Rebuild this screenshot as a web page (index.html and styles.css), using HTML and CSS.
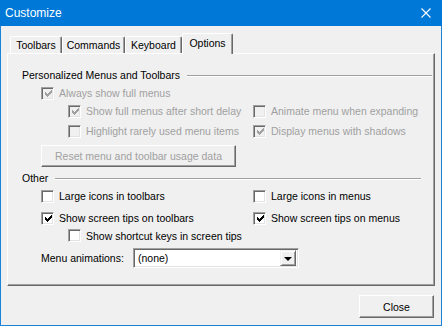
FILE: index.html
```html
<!DOCTYPE html>
<html lang="en">
<head>
    <meta charset="UTF-8">
    <title>Customize</title>
    <link rel="stylesheet" href="styles.css">
</head>
<body>
    <div class="window">
        <div class="titlebar">
            <span class="title">Customize</span>
            <svg class="close-x" width="10" height="10" viewBox="0 0 10 10">
                <path d="M0.5 0.5 L9.5 9.5 M9.5 0.5 L0.5 9.5" stroke="#fff" stroke-width="1.1" fill="none"/>
            </svg>
        </div>

        <div class="content">
            <div class="tabs">
                <div class="tab tab-toolbars">Toolbars</div>
                <div class="tab tab-commands">Commands</div>
                <div class="tab tab-keyboard">Keyboard</div>
                <div class="tab tab-options selected">Options</div>
            </div>

            <div class="panel">
                <div class="group-header first">
                    <span>Personalized Menus and Toolbars</span>
                    <div class="etch"></div>
                </div>

                <div class="row row-1 disabled">
                    <label class="check checked"><span class="box"></span>Always show full menus</label>
                </div>
                <div class="row row-2 disabled sub">
                    <label class="check checked cell-sub"><span class="box"></span>Show full menus after short delay</label>
                    <label class="check"><span class="box"></span>Animate menu when expanding</label>
                </div>
                <div class="row row-3 disabled sub">
                    <label class="check cell-sub"><span class="box"></span>Highlight rarely used menu items</label>
                    <label class="check checked"><span class="box"></span>Display menus with shadows</label>
                </div>

                <div class="reset-wrap">
                    <button class="btn reset" disabled>Reset menu and toolbar usage data</button>
                </div>

                <div class="group-header second">
                    <span>Other</span>
                    <div class="etch"></div>
                </div>

                <div class="row row-4">
                    <label class="check cell"><span class="box"></span>Large icons in toolbars</label>
                    <label class="check"><span class="box"></span>Large icons in menus</label>
                </div>
                <div class="row row-5">
                    <label class="check checked cell"><span class="box"></span>Show screen tips on toolbars</label>
                    <label class="check checked"><span class="box"></span>Show screen tips on menus</label>
                </div>
                <div class="row row-6 sub">
                    <label class="check"><span class="box"></span>Show shortcut keys in screen tips</label>
                </div>

                <div class="row select-row">
                    <span class="select-label">Menu animations:</span>
                    <div class="select">
                        <span class="select-value">(none)</span>
                        <span class="select-btn"><span class="arrow"></span></span>
                    </div>
                </div>
            </div>

            <div class="footer">
                <button class="btn close">Close</button>
            </div>
        </div>
    </div>
</body>
</html>
```

FILE: styles.css
```css
body {
    margin: 0;
    font-family: 'Liberation Sans', Arial, sans-serif;
    font-size: 10.5px;
    color: #000000;
    background-color: #f0f0f0;
}

.window {
    width: 442px;
    height: 326px;
    box-sizing: border-box;
    border: 1px solid #1c84d8;
    border-top: none;
    background-color: #f0f0f0;
}

/* Title bar */
.titlebar {
    height: 26px;
    margin: 0 -1px;
    background-color: #0078d7;
    display: flex;
    align-items: center;
    justify-content: space-between;
    padding: 0 11px 0 5px;
}

.title {
    color: #ffffff;
    font-size: 12px;
}

.close-x {
    display: block;
}

.content {
    padding: 7px 6px 0 6px;
}

/* Tabs */
.tabs {
    display: flex;
    align-items: flex-end;
    height: 20px;
    padding-left: 3px;
    position: relative;
    z-index: 1;
}

.tab {
    box-sizing: border-box;
    height: 17px;
    border-top: 1px solid #ffffff;
    border-left: 1px solid #ffffff;
    border-right: 1px solid #696969;
    box-shadow: inset -1px 0 0 #a0a0a0;
    border-radius: 2px 2px 0 0;
    text-align: center;
    line-height: 16px;
    background-color: #f0f0f0;
}

.tab-toolbars { width: 52px; }
.tab-commands { width: 63px; }
.tab-keyboard { width: 57px; }

.tab-options {
    width: 51px;
    height: 21px;
    margin-bottom: -1px;
    line-height: 18px;
}

/* Panel */
.panel {
    box-sizing: border-box;
    height: 233px;
    border-top: 1px solid #ffffff;
    border-left: 1px solid #ffffff;
    border-right: 1px solid #696969;
    border-bottom: 1px solid #696969;
    box-shadow: inset -1px -1px 0 #a0a0a0;
    padding: 14px 0 0 14px;
}

.group-header {
    display: flex;
    align-items: center;
    height: 14px;
    gap: 7px;
}

.group-header.first {
    margin-right: 2px;
}

.group-header.second {
    margin-top: 4px;
    margin-right: 13px;
}

.etch {
    flex: 1;
    height: 1px;
    background-color: #a0a0a0;
    border-bottom: 1px solid #ffffff;
    margin-top: 1px;
}

/* Checkbox rows */
.row {
    display: flex;
    align-items: center;
    height: 18px;
    padding-left: 19px;
}

.row.sub {
    padding-left: 46px;
}

.row-1 { margin-top: 2px; }
.row-3 { margin-top: 2px; }
.row-4 { margin-top: 2px; }
.row-5 { margin-top: 4px; }
.row-6 { height: 17px; }

.cell {
    width: 212px;
}

.cell-sub {
    width: 185px;
}

.check {
    display: flex;
    align-items: center;
    gap: 5px;
    white-space: nowrap;
}

.box {
    box-sizing: border-box;
    width: 13px;
    height: 13px;
    flex: none;
    background-color: #ffffff;
    border-top: 1px solid #a0a0a0;
    border-left: 1px solid #a0a0a0;
    border-right: 1px solid #ffffff;
    border-bottom: 1px solid #ffffff;
    box-shadow: inset 1px 1px 0 #696969, inset -1px -1px 0 #e3e3e3;
    position: relative;
}

.check.checked .box::after {
    content: "";
    position: absolute;
    left: 3px;
    top: 2px;
    width: 7px;
    height: 7px;
    background-image: url("data:image/svg+xml,%3Csvg xmlns='http://www.w3.org/2000/svg' width='7' height='7'%3E%3Cpath d='M0 2h1v1h1v1h1v-1h1v-1h1v-1h1v-1h1v3h-1v1h-1v1h-1v1h-1v1h-1v-1h-1v-1h-1v-1h-1z' fill='%23000'/%3E%3C/svg%3E");
}

.disabled .check {
    color: #a0a0a0;
}

.disabled .box {
    background-color: #f0f0f0;
}

.disabled .check.checked .box::after {
    background-image: url("data:image/svg+xml,%3Csvg xmlns='http://www.w3.org/2000/svg' width='7' height='7'%3E%3Cpath d='M0 2h1v1h1v1h1v-1h1v-1h1v-1h1v-1h1v3h-1v1h-1v1h-1v1h-1v1h-1v-1h-1v-1h-1v-1h-1z' fill='%23a0a0a0'/%3E%3C/svg%3E");
}

/* Buttons */
.btn {
    box-sizing: border-box;
    font-family: 'Liberation Sans', Arial, sans-serif;
    font-size: 10.5px;
    color: #000000;
    background-color: #f0f0f0;
    border-top: 1px solid #ffffff;
    border-left: 1px solid #ffffff;
    border-right: 1px solid #696969;
    border-bottom: 1px solid #696969;
    box-shadow: inset -1px -1px 0 #a0a0a0;
    border-radius: 0;
    padding: 0;
}

.reset-wrap {
    padding-left: 19px;
    margin-top: 5px;
}

.reset {
    width: 195px;
    height: 22px;
    color: #a0a0a0;
}

/* Select */
.select-row {
    height: 20px;
    margin-top: 4px;
}

.select-label {
    width: 92px;
}

.select {
    box-sizing: border-box;
    width: 166px;
    height: 20px;
    background-color: #ffffff;
    border-top: 1px solid #a0a0a0;
    border-left: 1px solid #a0a0a0;
    border-right: 1px solid #ffffff;
    border-bottom: 1px solid #ffffff;
    box-shadow: inset 1px 1px 0 #696969, inset -1px -1px 0 #e3e3e3;
    display: flex;
    align-items: center;
    justify-content: space-between;
    padding: 2px 2px 2px 4px;
}

.select-btn {
    box-sizing: border-box;
    width: 16px;
    height: 16px;
    background-color: #f0f0f0;
    border-top: 1px solid #f0f0f0;
    border-left: 1px solid #f0f0f0;
    border-right: 1px solid #696969;
    border-bottom: 1px solid #696969;
    box-shadow: inset 1px 1px 0 #ffffff, inset -1px -1px 0 #a0a0a0;
    display: flex;
    align-items: center;
    justify-content: center;
}

.arrow {
    width: 0;
    height: 0;
    border-left: 4px solid transparent;
    border-right: 4px solid transparent;
    border-top: 4px solid #000000;
    margin-top: 1px;
}

/* Footer */
.footer {
    display: flex;
    justify-content: flex-end;
    padding-top: 9px;
    padding-right: 1px;
}

.close {
    width: 75px;
    height: 23px;
}
```
